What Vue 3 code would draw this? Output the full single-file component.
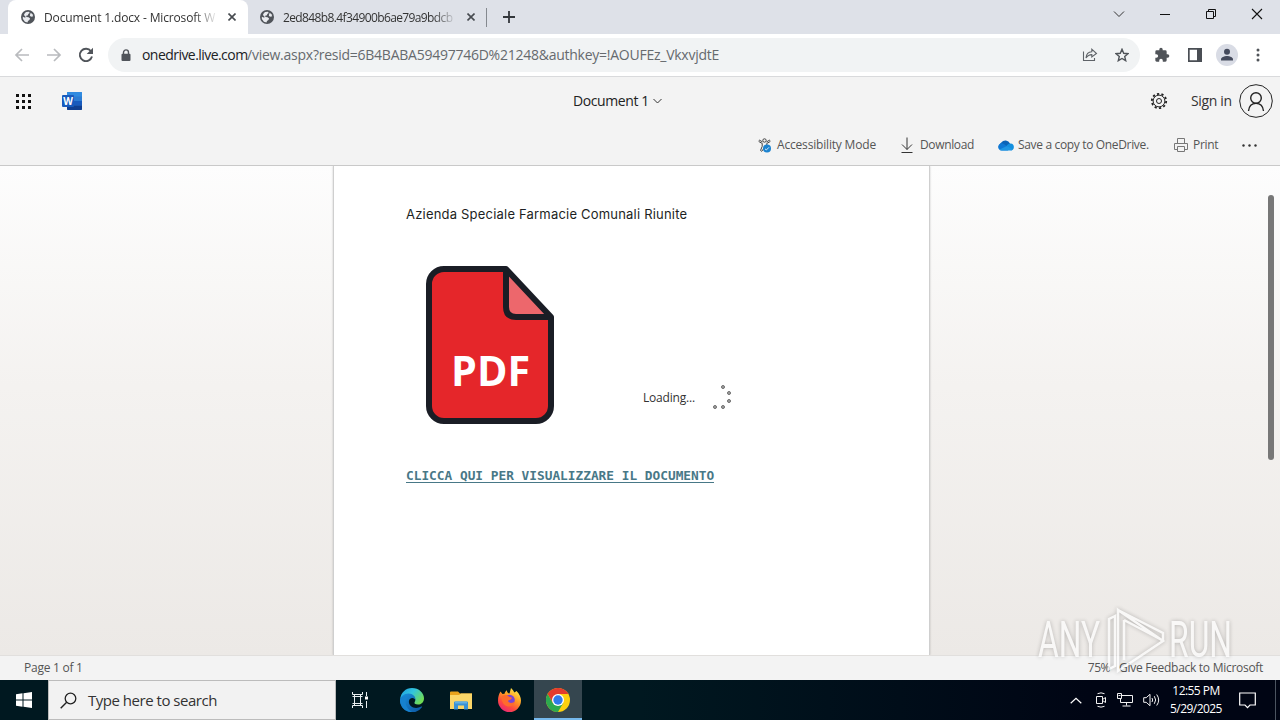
<script setup>
import { ref } from "vue";

const tabs = ref([
  { title: "Document 1.docx - Microsoft W", active: true },
  { title: "2ed848b8.4f34900b6ae79a9bdcb", active: false },
]);

const url = {
  host: "onedrive.live.com",
  path: "/view.aspx?resid=6B4BABA59497746D%21248&authkey=!AOUFEz_VkxvjdtE",
};

// waffle dots, 3 x 3
const dots = [0, 1, 2].flatMap((r) => [0, 1, 2].map((c) => ({ x: c * 6, y: r * 6 })));

const spinner = [
  { x: 10, y: 2 },
  { x: 16, y: 8 },
  { x: 16, y: 16 },
  { x: 10, y: 22 },
  { x: 2, y: 22 },
];
</script>

<template>
  <div class="screen">
    <div class="tab-strip">
      <div v-for="tab in tabs" :key="tab.title" class="tab" :class="{ active: tab.active }">
        <svg class="globe" width="14" height="14" viewBox="0 0 14 14">
          <circle cx="7" cy="7" r="7" fill="#50545a" />
          <path d="M5.2 1.9 8 1.7l.7 1.2-1.5 1-.2 1.3-1.8.6.2 1.2 2.2.2 1.5 1.3-.7 1.6-1.4 1-.5 1.4-2.6-.8-2-2.8-.1-2.2 2.4 1.1.4-1.1-1.7-1.6 1-2.1z" fill="#e9ebef" />
          <path d="m9.7 2.7 1.7 1.5.8 2.1-1.7.5-1.6-.8.1-1.2z" fill="#e9ebef" />
        </svg>
        <span class="tab-title">{{ tab.title }}</span>
        <svg class="tab-close" width="8" height="8" viewBox="0 0 8 8">
          <path d="m.5.5 7 7m0-7-7 7" stroke="#474b50" stroke-width="1.6" />
        </svg>
      </div>
      <span class="tab-separator"></span>
      <svg class="new-tab" width="12" height="12" viewBox="0 0 12 12">
        <path d="M6 0v12M0 6h12" stroke="#33373b" stroke-width="1.8" />
      </svg>
      <div class="window-buttons">
        <svg width="12" height="12" viewBox="0 0 12 12"><path d="m1 3.5 5 5 5-5" fill="none" stroke="#333" /></svg>
        <svg width="12" height="12" viewBox="0 0 12 12"><path d="M1 6.5h10" stroke="#111" /></svg>
        <svg width="12" height="12" viewBox="0 0 12 12">
          <path d="M1.5 3.5h7v7h-7zM3.5 3.5v-2h7v7h-2" fill="none" stroke="#111" />
        </svg>
        <svg width="12" height="12" viewBox="0 0 12 12"><path d="m1 1 10 10m0-10L1 11" stroke="#111" stroke-width="1.1" /></svg>
      </div>
    </div>

    <div class="toolbar">
      <div class="nav">
        <svg width="16" height="16" viewBox="0 0 16 16"><path d="M15 8H2m6-6L2 8l6 6" fill="none" stroke="#b9bbbe" stroke-width="1.7" /></svg>
        <svg width="16" height="16" viewBox="0 0 16 16"><path d="M1 8h13M8 2l6 6-6 6" fill="none" stroke="#b9bbbe" stroke-width="1.7" /></svg>
        <svg width="16" height="16" viewBox="0 0 16 16">
          <path d="M13 4.2A6.2 6.2 0 1 0 14 9.6" fill="none" stroke="#50545a" stroke-width="1.9" />
          <path d="M15 .8v6.3H8.7z" fill="#50545a" />
        </svg>
      </div>
      <div class="omnibox">
        <svg class="lock" width="10" height="13" viewBox="0 0 10 13">
          <path d="M2.5 5V3.4a2.5 2.5 0 0 1 5 0V5" fill="none" stroke="#50545a" stroke-width="1.4" />
          <rect x=".5" y="4.7" width="9" height="7.3" rx="1" fill="#50545a" />
        </svg>
        <span class="host">{{ url.host }}</span><span class="path">{{ url.path }}</span>
        <svg class="share" width="16" height="16" viewBox="0 0 16 16">
          <path d="M1.5 4.5v9h11v-2.5M4 11c.3-4 2.4-6 5.8-6.2V2.2L14.5 6.5 9.8 10V7.6C7 7.6 5.500 8.700 4 11z" fill="none" stroke="#5f6368" stroke-width="1.1" />
        </svg>
        <svg class="star" width="14" height="14" viewBox="0 0 14 14">
          <path d="m7 1.3 1.7 4 4.2.4-3.2 2.8 1 4.200L7 10.500l-3.700 2.200 1-4.200L1.100 5.700l4.200-.4z" fill="none" stroke="#505459" stroke-width="1.4" />
        </svg>
      </div>
      <div class="extensions">
        <svg width="16" height="16" viewBox="0 0 24 24">
          <path fill="#505459" d="M20.500 11H19V7a2 2 0 0 0-2-2h-4V3.500a2.500 2.500 0 0 0-5 0V5H4a2 2 0 0 0-2 2v3.800h1.500a2.700 2.700 0 0 1 0 5.400H2V20c0 1.100.9 2 2 2h3.800v-1.500a2.700 2.700 0 0 1 5.400 0V22H17a2 2 0 0 0 2-2v-4h1.500a2.500 2.500 0 0 0 0-5z" />
        </svg>
        <svg width="14" height="14" viewBox="0 0 14 14">
          <path fill="#4a4e54" fill-rule="evenodd" d="M0 0h14v14H0zM1.700 1.700v10.600H9V1.700z" />
        </svg>
        <svg width="22" height="22" viewBox="0 0 22 22">
          <circle cx="11" cy="11" r="11" fill="#d9dce5" />
          <circle cx="11" cy="7.700" r="3" fill="#444a5c" />
          <path d="M5 16.500v-1.200c0-2 3.500-3.300 6-3.300s6 1.300 6 3.300v1.200z" fill="#444a5c" />
        </svg>
        <svg width="4" height="14" viewBox="0 0 4 14" fill="#505459">
          <circle cx="2" cy="2" r="1.500" /><circle cx="2" cy="7" r="1.500" /><circle cx="2" cy="12" r="1.500" />
        </svg>
      </div>
    </div>

    <header class="app-header">
      <svg class="waffle" width="15" height="15" viewBox="0 0 15 15">
        <rect v-for="d in dots" :key="`${d.x}-${d.y}`" :x="d.x" :y="d.y" width="3" height="3" fill="#111" />
      </svg>
      <svg class="word" width="20" height="18" viewBox="0 0 20 18">
        <rect x="5" width="15" height="18" rx="1" fill="#2b7cd3" />
        <path d="M5 1a1 1 0 0 1 1-1h13a1 1 0 0 1 1 1v3.500H5z" fill="#2f8ae0" />
        <path d="M5 9h15v4.500H5z" fill="#185abd" />
        <path d="M5 13.500h15V17a1 1 0 0 1-1 1H6a1 1 0 0 1-1-1z" fill="#103f91" />
        <rect y="3" width="12" height="12" rx="1" fill="#185abd" />
        <text x="6" y="12.500" text-anchor="middle" fill="#fff">W</text>
      </svg>
      <div class="doc-name">
        <span>Document 1</span>
        <svg width="9" height="6" viewBox="0 0 9 6"><path d="m.5 1 4 4 4-4" fill="none" stroke="#333" /></svg>
      </div>
      <svg class="gear" width="18" height="18" viewBox="0 0 18 18" fill="none" stroke="#222">
        <circle cx="9" cy="9" r="7.200" stroke-width="1.800" stroke-dasharray="2.260 2.260" />
        <circle cx="9" cy="9" r="5.900" />
        <circle cx="9" cy="9" r="2.500" />
      </svg>
      <span class="sign-in">Sign in</span>
      <svg class="avatar" width="34" height="34" viewBox="0 0 34 34" fill="none" stroke="#222">
        <circle cx="17" cy="17" r="16.300" />
        <g stroke-width="1.400">
          <circle cx="17" cy="14" r="5.300" />
          <path d="M9.500 27c.5-4.800 3.500-7.600 7.500-7.600s7 2.800 7.500 7.600" />
        </g>
      </svg>
    </header>

    <div class="commands">
      <div class="command accessibility">
        <svg width="14" height="15" viewBox="0 0 14 15">
          <circle cx="6.500" cy="2.500" r="1.700" fill="none" stroke="#444" />
          <path d="M1.500 2.200C.6 2.600.8 3.700 1.500 4l2.700 1.400v3L2.700 12c-.3 1.200 1.200 1.700 1.700.7l1.400-2.600M11.500 2.200c.9.4.7 1.500 0 1.800L8.800 5.400V7M1.500 2.200l3 1.700M11.500 2.200l-3 1.700" fill="none" stroke="#444" />
          <circle cx="9" cy="10.500" r="4" fill="#1c83cf" />
          <path d="m7 10.800 1.300 1.200 2.700-2.700" fill="none" stroke="#d7ecfa" />
        </svg>
        <span>Accessibility Mode</span>
      </div>
      <div class="command download">
        <svg width="12" height="16" viewBox="0 0 12 16"><path d="M6 .5v12M1 7.500l5 5 5-5M.5 15.500h11" fill="none" stroke="#333" /></svg>
        <span>Download</span>
      </div>
      <div class="command onedrive">
        <svg width="16" height="11" viewBox="0 0 16 11">
          <path d="M3 8.500A3.500 3.500 0 0 1 3.300 2.600 5 5 0 0 1 12 3.500l-1 4z" fill="#0b64b8" />
          <path d="M3.700 10.500A3.600 3.600 0 1 1 5.900 4l6 4.500-2 2z" fill="#0f78d4" />
          <path d="m8.500 5.500 2.400-1.700a3.500 3.500 0 0 1 1.800-.4A3.600 3.600 0 0 1 13 10.500z" fill="#1490df" />
          <path d="M1.500 9.500 9 6l6 3.500c-.6.700-1.300 1-2.300 1h-9c-1 0-1.700-.4-2.200-1z" fill="#1f97e4" />
        </svg>
        <span>Save a copy to OneDrive.</span>
      </div>
      <div class="command print">
        <svg width="14" height="14" viewBox="0 0 14 14" fill="none" stroke="#777">
          <path d="M3.500 5.500v-5h7v5M3.500 11.500h-3v-6h13v6h-3M3.500 8.500h7v5h-7z" />
        </svg>
        <span>Print</span>
      </div>
      <svg class="more" width="15" height="3" viewBox="0 0 15 3" fill="#333">
        <circle cx="1.500" cy="1.500" r="1.200" /><circle cx="7.500" cy="1.500" r="1.200" /><circle cx="13.500" cy="1.500" r="1.200" />
      </svg>
    </div>

    <main class="canvas">
      <article class="page">
        <p class="heading">Azienda Speciale Farmacie Comunali Riunite</p>
        <svg class="pdf" width="130" height="160" viewBox="0 0 130 160">
          <path d="M17 4h64l45 48v89a15 15 0 0 1-15 15H19a15 15 0 0 1-15-15V19A15 15 0 0 1 19 4z" fill="#e5262a" />
          <path d="M81 4v40q0 8 8 8h37z" fill="#ed676c" />
          <path d="M19 4h62l45 48v89a15 15 0 0 1-15 15H19a15 15 0 0 1-15-15V19A15 15 0 0 1 19 4zM81 4v38q0 10 10 10h35" fill="none" stroke="#1a1d25" stroke-width="6" stroke-linejoin="round" />
          <text x="26" y="121" textLength="79" lengthAdjust="spacingAndGlyphs" fill="#fff">PDF</text>
        </svg>
        <a class="link">CLICCA QUI PER VISUALIZZARE IL DOCUMENTO</a>
        <div class="loading">
          <span>Loading...</span>
          <svg width="20" height="25" viewBox="0 0 20 25">
            <circle v-for="(s, i) in spinner" :key="i" :cx="s.x" :cy="s.y" r="1.500" fill="#a5a5a5" stroke="#6d6d6d" />
          </svg>
        </div>
      </article>
      <div class="scrollbar"></div>
    </main>

    <footer class="status">
      <span class="page-count">Page 1 of 1</span>
      <span class="zoom">75%</span>
      <span class="feedback">Give Feedback to Microsoft</span>
    </footer>

    <div class="taskbar">
      <div class="start">
        <svg width="16" height="16" viewBox="0 0 16 16" fill="#fff">
          <path d="M0 2.200 6.500 1.300v6.200H0zM7.500 1.200 16 0v7.500H7.500zM0 8.500h6.500v6.200L0 13.800zM7.500 8.500H16V16l-8.500-1.200z" />
        </svg>
      </div>
      <div class="search">
        <svg width="17" height="17" viewBox="0 0 17 17"><circle cx="10.500" cy="6.500" r="5.300" fill="none" stroke="#222" stroke-width="1.300" /><path d="m6.700 10.300-6 6" stroke="#222" stroke-width="1.400" /></svg>
        <span>Type here to search</span>
      </div>
      <div class="task">
        <svg width="16" height="16" viewBox="0 0 16 16" fill="none" stroke="#e8eef0">
          <path d="M.5 0v2.500h10V0M.5 16v-2.500h10V16M2.500 2.500v11M8.500 2.500v11M.5 4.500h10M.5 11.500h10M14.500 0v4M14.500 9v7" />
          <path d="M13 4.500h3v3h-3z" fill="#fff" stroke="none" />
        </svg>
      </div>
      <div class="task">
        <svg width="24" height="24" viewBox="0 0 24 24">
          <defs>
            <linearGradient id="edge-top" x1="0" y1="0" x2="1" y2=".6"><stop offset="0" stop-color="#1b9de2" /><stop offset=".5" stop-color="#33c5dd" /><stop offset="1" stop-color="#70dc54" /></linearGradient>
            <linearGradient id="edge-low" x1="0" y1="0" x2="1" y2="1"><stop offset="0" stop-color="#1a91dc" /><stop offset="1" stop-color="#0c55a0" /></linearGradient>
          </defs>
          <path d="M.2 11C.9 4.700 5.500 0 12 0c7 0 12 5 12 10.200 0 4-2.800 6.300-6 6.300-3 0-4.200-1.200-3.300-2.500 2-3-1-6-4.700-6C5 8 1 9 .2 11z" fill="url(#edge-top)" />
          <path d="M0 12c.2-3.500 4-6.500 8.500-6.500 4.700 0 7.300 3.500 7 6.500-.8-1.500-2-2.200-3.500-2-3.500.5-4.200 5-1.500 7.700 3 3 7.500 2.600 10.800.8.700-.3 1 .2.600.7A12 12 0 0 1 0 12z" fill="url(#edge-low)" />
          <path d="M8 9c-4 3-3 11 4 15C5 24 0 18.500.1 12 .3 9 4 7.500 8 9z" fill="#1682cf" />
        </svg>
      </div>
      <div class="task">
        <svg width="22" height="19" viewBox="0 0 22 19">
          <path d="M0 1.500A1 1 0 0 1 1 .5h7l2 2H22V5H0z" fill="#e8a21c" />
          <path d="M0 4h9l2-1.500h11V18H0z" fill="#fbd668" />
          <path d="M4 18.500v-7a1 1 0 0 1 1-1h12a1 1 0 0 1 1 1v7h-4v-4H8v4z" fill="#3b92d4" />
          <path d="M5 10.500h12v2H5z" fill="#62b0e4" />
        </svg>
      </div>
      <div class="task">
        <svg width="23" height="24" viewBox="0 0 23 24">
          <defs>
            <linearGradient id="fox" x1=".8" y1="0" x2=".2" y2="1"><stop offset="0" stop-color="#fff14a" /><stop offset=".4" stop-color="#ff9a24" /><stop offset=".7" stop-color="#ff4a3f" /><stop offset="1" stop-color="#e52380" /></linearGradient>
          </defs>
          <path d="M2.500 3.500 4.500 6l2-.3C7 4 8 2.600 9 2.200c-.2 1.600.7 2.800 2.500 3.300L13 0c1.800 1.500 2.500 3 3.500 4.500L18.500 3c3 3 4.500 6.500 4.500 9.500A11.500 11.500 0 0 1 0 12.500c0-3.500.8-6.500 2.500-9z" fill="url(#fox)" />
          <circle cx="11.500" cy="12" r="5.300" fill="#7844d8" />
          <path d="M4 8c3-1.600 5-1 7 .8 1 .6 2.500.4 3 1-.6 2-2.700 2-4 3 .5 2.500 4.500 3 7 .5-1 4.500-5 6-8 5-4-1.300-6-5.800-5-10.300z" fill="#ff6c2c" />
        </svg>
      </div>
      <div class="task current">
        <svg width="24" height="24" viewBox="0 0 24 24">
          <circle cx="12" cy="12" r="12" fill="#fdd00f" />
          <path d="M1.600 6A12 12 0 0 1 22.400 6H12v6L6.800 15z" fill="#e33b2e" />
          <path d="M1.600 6A12 12 0 0 0 12 24l5.200-9H6.800z" fill="#2da94f" />
          <circle cx="12" cy="12" r="6" fill="#fff" />
          <circle cx="12" cy="12" r="4.700" fill="#2f7bea" />
        </svg>
      </div>
      <div class="tray">
        <svg width="12" height="7" viewBox="0 0 12 7"><path d="m.7 6.300 5.300-5 5.300 5" fill="none" stroke="#fff" stroke-width="1.200" /></svg>
        <svg width="12" height="16" viewBox="0 0 12 16" fill="none" stroke="#f2f2f2">
          <path d="M2.500 1.700q3.500-1.700 7 0M2.500 14.300q3.500 1.700 7 0M1.500 4.500h6v7h-6zM7.500 7.500l3-2v5l-3-2" />
        </svg>
        <svg width="16" height="14" viewBox="0 0 16 14" fill="none" stroke="#f2f2f2">
          <path d="M5 2.500h10.500v7H3.500V6M9.500 9.500v3M5.500 13h8M.5.5h4v5h-4zM1.500 2.500h2" />
        </svg>
        <svg width="18" height="14" viewBox="0 0 18 14" fill="none" stroke="#f2f2f2">
          <path d="M.7 4.700h2.500L7 1.300v11.400L3.200 9.300H.7zM9 5q1.400 2 0 4M11.300 3.200q2.700 3.800 0 7.600M13.700 1.500q4 5.500 0 11" />
        </svg>
        <div class="clock">
          <span>12:55 PM</span>
          <span class="date">5/29/2025</span>
        </div>
        <svg class="notice" width="17" height="17" viewBox="0 0 17 17"><path d="M.7 1h15.600v12H11l-2.500 2.600L6 13H.7z" fill="none" stroke="#fff" stroke-width="1.200" /></svg>
        <span class="peek"></span>
      </div>
    </div>

    <svg class="watermark" width="206" height="74" viewBox="0 0 206 74">
      <text x="4" y="52" textLength="62" lengthAdjust="spacingAndGlyphs">ANY</text>
      <text x="135" y="52" textLength="63" lengthAdjust="spacingAndGlyphs">RUN</text>
      <path d="M81 11l-6 3v50l6-3zM84 5v61l45-30zM84 5l45 23v8M90 15l36 19M90 15v40" />
    </svg>
  </div>
</template>

<style>
body {
  overflow: hidden;
}
</style>

<style scoped>
.screen {
  position: relative;
  display: flex;
  flex-direction: column;
  width: 1280px;
  height: 720px;
  overflow: hidden;
  background: #f3f3f3;
  font-family: "Open Sans", "Noto Sans", sans-serif;
  font-size: 12px;
  color: #333;
}

.screen svg {
  display: block;
  flex: none;
}

.screen span {
  white-space: nowrap;
}

.tab-strip {
  display: flex;
  align-items: center;
  height: 34px;
  padding-left: 8px;
  background: #dee1e8;
}

.tab {
  display: flex;
  align-items: center;
  box-sizing: border-box;
  width: 240px;
  height: 34px;
  padding: 0 12px 0 13px;
}

.tab:nth-child(2) {
  width: 238px;
  padding: 0 11px 0 12px;
}

.tab.active {
  border-radius: 8px 8px 0 0;
  background: #fff;
}

.tab-title {
  width: 172px;
  margin-left: 9px;
  font-size: 12px;
  letter-spacing: -0.15px;
  mask-image: linear-gradient(90deg, #000 150px, transparent 174px);
}

.tab:nth-child(2) .tab-title {
  letter-spacing: -0.62px;
}

.tab-close {
  margin-left: auto;
}

.tab-separator {
  width: 1px;
  height: 19px;
  background: #85898f;
}

.new-tab {
  margin-left: 16px;
}

.window-buttons {
  display: flex;
  gap: 34px;
  margin: -6px 17px 0 auto;
}

.toolbar {
  display: flex;
  align-items: center;
  box-sizing: border-box;
  height: 43px;
  border-bottom: 1px solid #d9dadc;
  background: #fff;
}

.nav {
  display: flex;
  gap: 16px;
  width: 94px;
  padding-left: 14px;
}

.omnibox {
  display: flex;
  align-items: center;
  width: 1032px;
  height: 34px;
  border-radius: 17px;
  background: #f1f3f4;
  font-size: 14px;
}

.omnibox span {
  margin-top: -1px;
}

.lock {
  margin: 0 11px 0 13px;
}

.host {
  width: 105px;
  color: #202124;
  letter-spacing: -0.55px;
}

.path {
  color: #666a6e;
  letter-spacing: -0.25px;
}

.share {
  margin-left: auto;
}

.star {
  margin: 0 11px 0 17px;
}

.extensions {
  display: flex;
  flex: 1;
  align-items: center;
  justify-content: space-between;
  padding: 0 20px 0 14px;
}

.extensions svg:nth-child(3) {
  margin-left: -4px;
}

.app-header {
  display: flex;
  align-items: center;
  height: 48px;
}

.waffle {
  margin-left: 16px;
}

.word {
  margin-left: 31px;
}

.word text {
  font: bold 10px "Open Sans", sans-serif;
}

.doc-name {
  display: flex;
  align-items: center;
  gap: 4px;
  width: 577px;
  margin-left: 491px;
  font-size: 14px;
  color: #222;
  letter-spacing: -0.4px;
}

.doc-name span,
.sign-in {
  margin-top: -1px;
}

.sign-in {
  width: 48px;
  margin-left: 23px;
  font-size: 14px;
  letter-spacing: -0.35px;
}

.commands {
  display: flex;
  align-items: center;
  box-sizing: border-box;
  height: 41px;
  padding-left: 758px;
  border-bottom: 1px solid #c9c9c9;
  color: #555;
}

.command {
  display: flex;
  align-items: center;
  gap: 5px;
}

.command span {
  margin-top: -1px;
}

.accessibility {
  width: 143px;
  letter-spacing: -0.18px;
}

.download {
  width: 97px;
  gap: 7px;
  letter-spacing: -0.35px;
}

.onedrive {
  width: 176px;
  gap: 4px;
  letter-spacing: -0.34px;
}

.print {
  width: 68px;
  letter-spacing: -0.3px;
}

.canvas {
  position: relative;
  display: flex;
  height: 489px;
  background: linear-gradient(#fdfdfd, #f4f2f0 45%, #ece9e6);
}

.page {
  position: relative;
  display: flex;
  flex-direction: column;
  align-items: flex-start;
  box-sizing: border-box;
  width: 597px;
  height: 489px;
  margin-left: 333px;
  padding: 38px 0 0 72px;
  border: 1px solid #cfcfcf;
  border-width: 0 1px;
  box-shadow: 0 0 2px rgba(0, 0, 0, 0.2);
  background: #fff;
  clip-path: inset(0 -3px);
}

.heading {
  height: 20px;
  margin: 0;
  font: 400 13px/20px Inter, sans-serif;
  color: #1d1f23;
  letter-spacing: 0.2px;
  white-space: nowrap;
}

.pdf {
  margin: 41px 0 44px 19px;
}

.pdf text {
  font: 900 42px "Open Sans", sans-serif;
  font-weight: 700;
}

.link {
  border-bottom: 1px solid #487887;
  font: bold 12.8px/13px "DejaVu Sans Mono", monospace;
  color: #487887;
}

.loading {
  position: absolute;
  top: 219px;
  left: 309px;
  display: flex;
  align-items: center;
  gap: 18px;
  letter-spacing: -0.2px;
}

.scrollbar {
  position: absolute;
  top: 29px;
  right: 6px;
  width: 6px;
  height: 265px;
  border-radius: 3px;
  background: #777;
}

.status {
  display: flex;
  align-items: center;
  box-sizing: border-box;
  height: 25px;
  padding: 0 16px 1px 24px;
  border-top: 1px solid #e1dfdd;
  background: #f3f3f3;
  color: #555;
}

.page-count {
  letter-spacing: -0.25px;
}

.zoom {
  margin-left: auto;
  letter-spacing: -0.5px;
}

.feedback {
  width: 145px;
  margin-left: 9px;
  letter-spacing: -0.28px;
}

.taskbar {
  display: flex;
  height: 40px;
  background: linear-gradient(90deg, #001820 50%, #000514 85%);
}

.start,
.task {
  display: flex;
  align-items: center;
  justify-content: center;
  width: 48px;
}

.task {
  width: 49px;
}

.task:nth-child(3) {
  width: 51px;
  padding-right: 0;
}

.task:nth-child(3) svg {
  margin-left: -3px;
}

.search {
  display: flex;
  align-items: center;
  gap: 11px;
  box-sizing: border-box;
  width: 288px;
  padding-left: 11px;
  border: 1px solid #bcbcbc;
  background: #f2f2f2;
  font-size: 15px;
  letter-spacing: -0.48px;
}

.current {
  box-sizing: border-box;
  width: 48px;
  border-bottom: 2px solid #76b9ed;
  background: #35464f;
}

.current svg {
  margin-top: 2px;
}

.tray {
  display: flex;
  align-items: center;
  margin-left: auto;
  gap: 10px;
  color: #fff;
}

.tray svg:nth-child(2) {
  margin-left: 3px;
}

.clock {
  display: flex;
  flex-direction: column;
  align-items: center;
  width: 54px;
  margin-left: -2px;
  line-height: 18px;
  letter-spacing: -0.55px;
}

.notice {
  margin-left: 6px;
}

.peek {
  width: 4px;
  height: 40px;
  margin-left: 9px;
  border-left: 1px solid #4b5460;
}

.watermark {
  position: absolute;
  top: 605px;
  left: 1034px;
  fill: none;
  filter: drop-shadow(0 0 2px rgba(0, 0, 0, 0.35));
  opacity: 0.68;
}

.watermark text {
  fill: #fff;
  font: 50px Roboto, sans-serif;
}

.watermark path {
  stroke: #fff;
  stroke-width: 2.5;
}
</style>
